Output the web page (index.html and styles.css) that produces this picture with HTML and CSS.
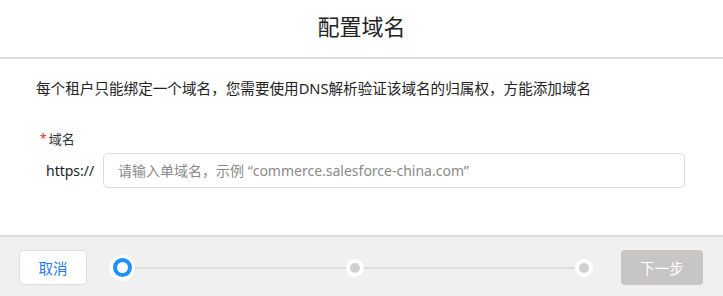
FILE: index.html
```html
<!DOCTYPE html>
<html lang="zh-CN">
<head>
<meta charset="utf-8">
<link rel="stylesheet" href="styles.css">
</head>
<body>
<div class="dialog">
  <header class="header">
    <h1 class="title">配置域名</h1>
  </header>
  <main class="body">
    <p class="desc">每个租户只能绑定一个域名，您需要使用DNS解析验证该域名的归属权，方能添加域名</p>
    <div class="field">
      <label class="label"><span class="req">*</span>域名</label>
      <div class="row">
        <span class="prefix">https://</span>
        <input class="input" type="text" placeholder="请输入单域名，示例 “commerce.salesforce-china.com”">
      </div>
    </div>
  </main>
  <footer class="footer">
    <button class="btn btn-cancel">取消</button>
    <div class="steps">
      <span class="step step-active"><span class="dot"></span></span>
      <span class="line"></span>
      <span class="step"><span class="dot"></span></span>
      <span class="line"></span>
      <span class="step"><span class="dot"></span></span>
    </div>
    <button class="btn btn-next" disabled>下一步</button>
  </footer>
</div>
</body>
</html>
```
FILE: styles.css
```css
* { box-sizing: border-box; }
html, body { margin: 0; padding: 0; }
body {
  width: 723px;
  height: 296px;
  background: #fff;
  font-family: "Noto Sans", "Noto Sans CJK SC", sans-serif;
  color: #333;
  overflow: hidden;
}
.dialog {
  display: flex;
  flex-direction: column;
  height: 296px;
}
.header {
  height: 59px;
  border-bottom: 2px solid #dedede;
  display: flex;
  align-items: center;
  justify-content: center;
}
.title {
  margin: 0;
  font-size: 22px;
  font-weight: 400;
  color: #222;
  line-height: 1;
  padding-bottom: 5px;
}
.body {
  flex: 1;
  padding: 0 38px 0 36px;
}
.desc {
  margin: 19px 0 0;
  font-size: 14.6px;
  line-height: 20px;
  color: #222;
}
.field {
  margin-top: 32px;
}
.label {
  display: flex;
  align-items: center;
  font-size: 13px;
  line-height: 18px;
  color: #333;
  padding-left: 4px;
}
.req {
  color: #e03030;
  margin-right: 2px;
  font-size: 12px;
}
.row {
  display: flex;
  align-items: center;
  margin-top: 5px;
}
.prefix {
  width: 67px;
  padding-left: 10px;
  font-size: 14px;
  color: #222;
}
.input {
  flex: 1;
  height: 35px;
  border: 1px solid #dcdcdc;
  border-radius: 5px;
  padding: 0 14px;
  font-family: "Noto Sans", "Noto Sans CJK SC", sans-serif;
  font-size: 14px;
  color: #333;
  outline: none;
  background: #fff;
}
.input::placeholder { color: #8a8a8a; }
.footer {
  height: 61px;
  border-top: 2px solid #dedede;
  background: #f0f0f0;
  display: flex;
  align-items: center;
  padding: 2px 20px 0 19px;
}
.btn {
  height: 35px;
  border-radius: 4px;
  font-family: "Noto Sans", "Noto Sans CJK SC", sans-serif;
  font-size: 14.5px;
}
.btn-cancel {
  width: 68px;
  background: #fff;
  border: 1px solid #dedede;
  color: #2a7ae2;
}
.btn-next {
  width: 82px;
  background: #c8c6c4;
  border: none;
  color: #fff;
}
.steps {
  flex: 1;
  display: flex;
  align-items: center;
  margin: 0 28px 0 22px;
}
.line {
  flex: 1;
  height: 2px;
  background: #dcdcdc;
}
.step {
  width: 18px;
  height: 18px;
  border-radius: 50%;
  background: #fff;
  display: flex;
  align-items: center;
  justify-content: center;
}
.step .dot {
  width: 10px;
  height: 10px;
  border-radius: 50%;
  background: #d0d0d0;
}
.step-active {
  width: 26px;
  height: 26px;
}
.step-active .dot {
  width: 19px;
  height: 19px;
  background: #fff;
  border: 4px solid #1e90ff;
}
```
